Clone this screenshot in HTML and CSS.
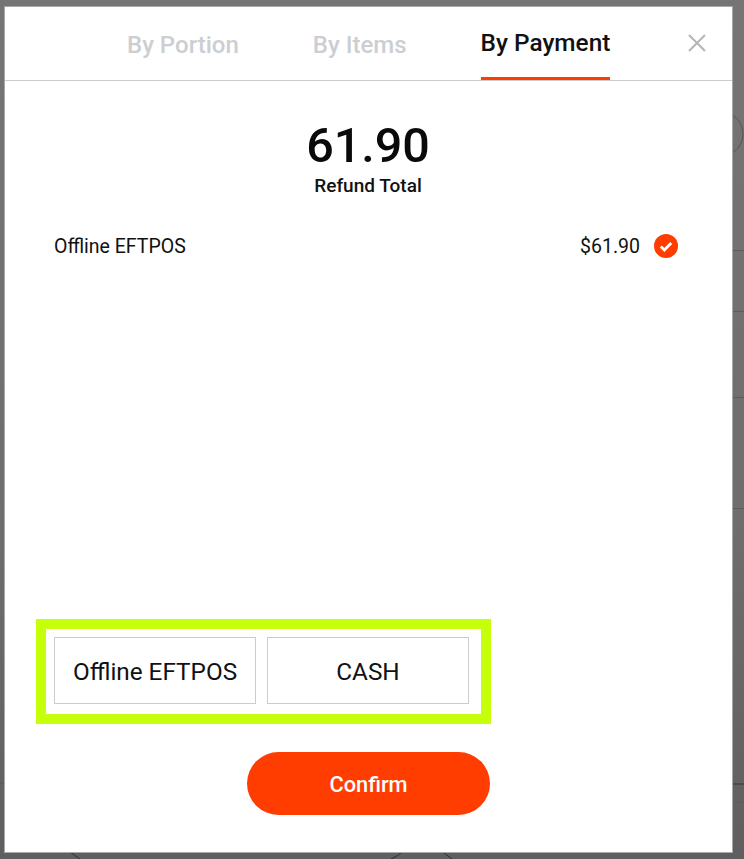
FILE: index.html
```html
<!DOCTYPE html>
<html lang="en">
<head>
<meta charset="UTF-8">
<meta name="viewport" content="width=device-width, initial-scale=1.0">
<title>Refund</title>
<link rel="stylesheet" href="styles.css">
</head>
<body>

<!-- bits of the page behind the dimmed overlay -->
<svg class="backdrop" width="744" height="859" viewBox="0 0 744 859">
    <circle cx="721" cy="134" r="22" fill="none" stroke="#555"/>
    <path d="M732 250.5 H744 M732 311.5 H744 M732 397.5 H744 M732 508.5 H744 M732 802.5 H744 M0 783.5 H5" stroke="#5c5c5c" fill="none"/>
    <path d="M732 784 H744" stroke="#444" stroke-width="1.5" fill="none"/>
    <path d="M70 852 L80 859 M402 852 Q398 856 391 859 M443 852 L452 859" stroke="#2e2e2e" fill="none"/>
</svg>

<div class="modal">
    <div class="tabs">
        <div class="tab">By Portion</div>
        <div class="tab">By Items</div>
        <div class="tab tab-active">By Payment</div>
        <svg class="close" width="20" height="20" viewBox="0 0 20 20">
            <path d="M2 2 L18 18 M18 2 L2 18" stroke="#b5b5b5" stroke-width="2" fill="none"/>
        </svg>
    </div>

    <div class="total">
        <div class="total-amount">61.90</div>
        <div class="total-label">Refund Total</div>
    </div>

    <div class="payment-row">
        <span class="payment-name">Offline EFTPOS</span>
        <span class="payment-amount">$61.90</span>
        <svg class="check" width="24" height="24" viewBox="0 0 24 24">
            <circle cx="12" cy="12" r="12" fill="#ff3d00"/>
            <path d="M6.8 12.4 L10.4 16 L17.2 9" stroke="#fff" stroke-width="2.8" fill="none"/>
        </svg>
    </div>

    <div class="methods">
        <button class="method">Offline EFTPOS</button>
        <button class="method">CASH</button>
    </div>

    <button class="confirm">Confirm</button>
</div>

</body>
</html>
```

FILE: styles.css
```css
html, body {
    height: 859px;
    overflow: hidden;
}
body {
    margin: 0;
    padding: 7px 0 0 5px;
    box-sizing: border-box;
    font-family: Roboto, Arial, sans-serif;
    color: #111;
    background: linear-gradient(#757575, #6e6e6e 60%, #5f5f5f);
}
.backdrop {
    position: absolute;
    top: 0;
    left: 0;
}
.modal {
    position: relative;
    width: 727px;
    height: 845px;
    background: #fff;
    box-shadow: 0 0 0 1px #a8a8a8;
    display: flex;
    flex-direction: column;
}
.tabs {
    height: 73px;
    flex: none;
    padding-left: 122px;
    display: flex;
    gap: 74px;
    border-bottom: 1px solid #ccc;
}
.tab {
    height: 73px;
    box-sizing: border-box;
    padding-top: 24px;
    font-size: 24px;
    line-height: 28px;
    font-weight: 500;
    color: #ccced2;
}
.tab-active {
    padding-top: 22px;
    font-size: 24.4px;
    color: #111;
    border-bottom: 3px solid #ff3d00;
}
.close {
    margin: 26px 25px 0 auto;
}
.total {
    margin-top: 36px;
    margin-left: -1px;
    text-align: center;
}
.total-amount {
    font-size: 48.5px;
    line-height: 58px;
    font-weight: 500;
    color: #0a0a0a;
}
.total-label {
    font-size: 19px;
    line-height: 22px;
    font-weight: 500;
}
.payment-row {
    margin-top: 37px;
    padding: 0 54px 0 49px;
    height: 24px;
    display: flex;
    align-items: center;
    font-size: 19.5px;
}
.payment-name {
    flex: 1;
}
.payment-amount {
    margin-right: 14px;
}
.methods {
    margin: auto 0 0 31px;
    width: 455px;
    height: 105px;
    box-sizing: border-box;
    border: 10px solid #c6ff0a;
    padding: 8px;
    display: flex;
    gap: 11px;
}
.method {
    width: 202px;
    height: 67px;
    background: #fff;
    border: 1px solid #ccc;
    padding: 1px 0 0;
    font-family: inherit;
    font-size: 24.3px;
    color: #111;
}
.confirm {
    margin: 28px 0 37px 242px;
    width: 243px;
    height: 63px;
    border: none;
    border-radius: 32px;
    padding: 1px 0 0;
    background: #ff3d00;
    color: #fff;
    font-family: inherit;
    font-size: 21.8px;
    font-weight: 500;
}
```
